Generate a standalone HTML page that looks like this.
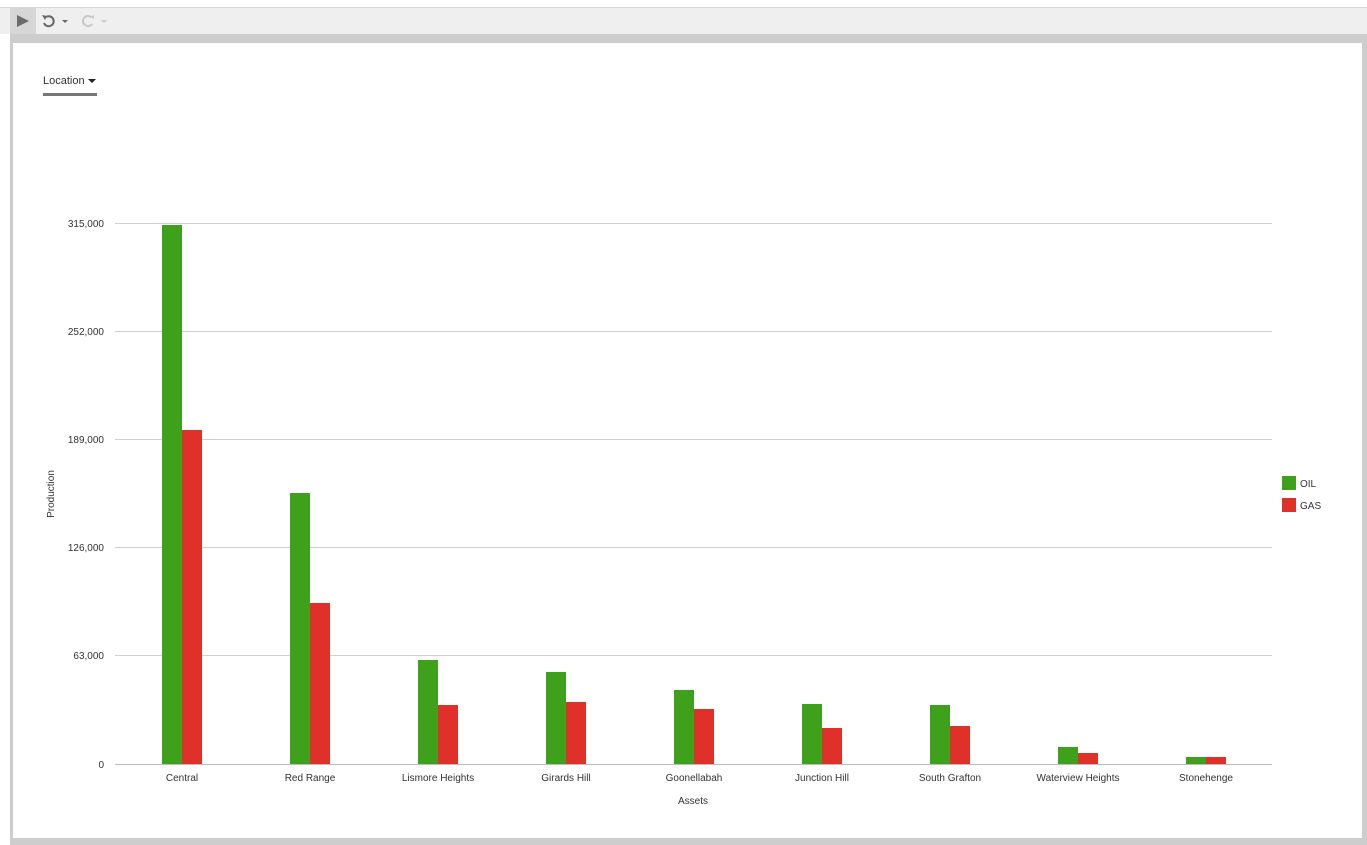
<!DOCTYPE html>
<html><head><style>
body{margin:0;width:1367px;height:845px;overflow:hidden;background:#fff;font-family:"Liberation Sans",sans-serif;position:relative}
.a{position:absolute}
.lbl{position:absolute;font-size:10px;color:#333}
</style></head><body>
<div class="a" style="left:0;top:7px;width:1367px;height:1px;background:#d8d8d8"></div>
<div class="a" style="left:0;top:8px;width:1367px;height:26px;background:#efefef"></div>
<div class="a" style="left:10px;top:8px;width:26px;height:26px;background:#d6d6d6"></div>
<svg class="a" style="left:0;top:8px" width="120" height="26">
<path d="M17 7 L29 13 L17 19 Z" fill="#6b6b6b"/>
<path d="M46 9 A5 5 0 1 1 44 15" fill="none" stroke="#666" stroke-width="2"/>
<path d="M42 7 L47 8 L45 12 Z" fill="#666"/>
<path d="M62 12 L68 12 L65 15 Z" fill="#666"/>
<path d="M91 9 A5 5 0 1 0 92 16" fill="none" stroke="#c8c8c8" stroke-width="2"/>
<path d="M94 7 L90 9 L94 11 Z" fill="#c8c8c8"/>
<path d="M101 12 L107 12 L104 15 Z" fill="#c8c8c8"/>
</svg>
<div class="a" style="left:0;top:34px;width:10px;height:811px;background:#fff"></div>
<div class="a" style="left:10px;top:34px;width:1357px;height:811px;background:#cdcdcd"></div>
<div class="a" style="left:13px;top:43px;width:1349px;height:795px;background:#fff"></div>
<div class="lbl" style="left:43px;top:75px;font-size:11px;color:#333">Location</div>
<svg class="a" style="left:88px;top:79px" width="10" height="6"><path d="M0 0 L8 0 L4 4Z" fill="#222"/></svg>
<div class="a" style="left:43px;top:93px;width:54px;height:3px;background:#777"></div>
<svg class="a" style="left:0;top:0" width="1367" height="845">
<g stroke="#cfcfcf" stroke-width="1">
<line x1="115" y1="223.5" x2="1272" y2="223.5"/>
<line x1="115" y1="331.5" x2="1272" y2="331.5"/>
<line x1="115" y1="439.5" x2="1272" y2="439.5"/>
<line x1="115" y1="547.5" x2="1272" y2="547.5"/>
<line x1="115" y1="655.5" x2="1272" y2="655.5"/>
<line x1="115" y1="764.5" x2="1272" y2="764.5" stroke="#bbb"/>
</g>
<g fill="#3fa01c">
<rect x="162" y="225" width="20" height="539"/>
<rect x="290" y="493" width="20" height="271"/>
<rect x="418" y="660" width="20" height="104"/>
<rect x="546" y="672" width="20" height="92"/>
<rect x="674" y="690" width="20" height="74"/>
<rect x="802" y="704" width="20" height="60"/>
<rect x="930" y="705" width="20" height="59"/>
<rect x="1058" y="747" width="20" height="17"/>
<rect x="1186" y="757" width="20" height="7"/>
<rect x="1282" y="476" width="14" height="14"/>
</g>
<g fill="#e0302a">
<rect x="182" y="430" width="20" height="334"/>
<rect x="310" y="603" width="20" height="161"/>
<rect x="438" y="705" width="20" height="59"/>
<rect x="566" y="702" width="20" height="62"/>
<rect x="694" y="709" width="20" height="55"/>
<rect x="822" y="728" width="20" height="36"/>
<rect x="950" y="726" width="20" height="38"/>
<rect x="1078" y="753" width="20" height="11"/>
<rect x="1206" y="757" width="20" height="7"/>
<rect x="1282" y="498" width="14" height="14"/>
</g>
<g font-family="Liberation Sans,sans-serif" font-size="10" fill="#333" text-anchor="end">
<text x="104" y="227">315,000</text>
<text x="104" y="335">252,000</text>
<text x="104" y="443">189,000</text>
<text x="104" y="551">126,000</text>
<text x="104" y="659">63,000</text>
<text x="104" y="768">0</text>
</g>
<g font-family="Liberation Sans,sans-serif" font-size="10" fill="#333" text-anchor="middle">
<text x="182" y="781">Central</text>
<text x="310" y="781">Red Range</text>
<text x="438" y="781">Lismore Heights</text>
<text x="566" y="781">Girards Hill</text>
<text x="694" y="781">Goonellabah</text>
<text x="822" y="781">Junction Hill</text>
<text x="950" y="781">South Grafton</text>
<text x="1078" y="781">Waterview Heights</text>
<text x="1206" y="781">Stonehenge</text>
<text x="693" y="804">Assets</text>
<text transform="translate(54,494) rotate(-90)">Production</text>
</g>
<g font-family="Liberation Sans,sans-serif" font-size="10" fill="#333">
<text x="1300" y="487">OIL</text>
<text x="1300" y="509">GAS</text>
</g>
</svg>
</body></html>
